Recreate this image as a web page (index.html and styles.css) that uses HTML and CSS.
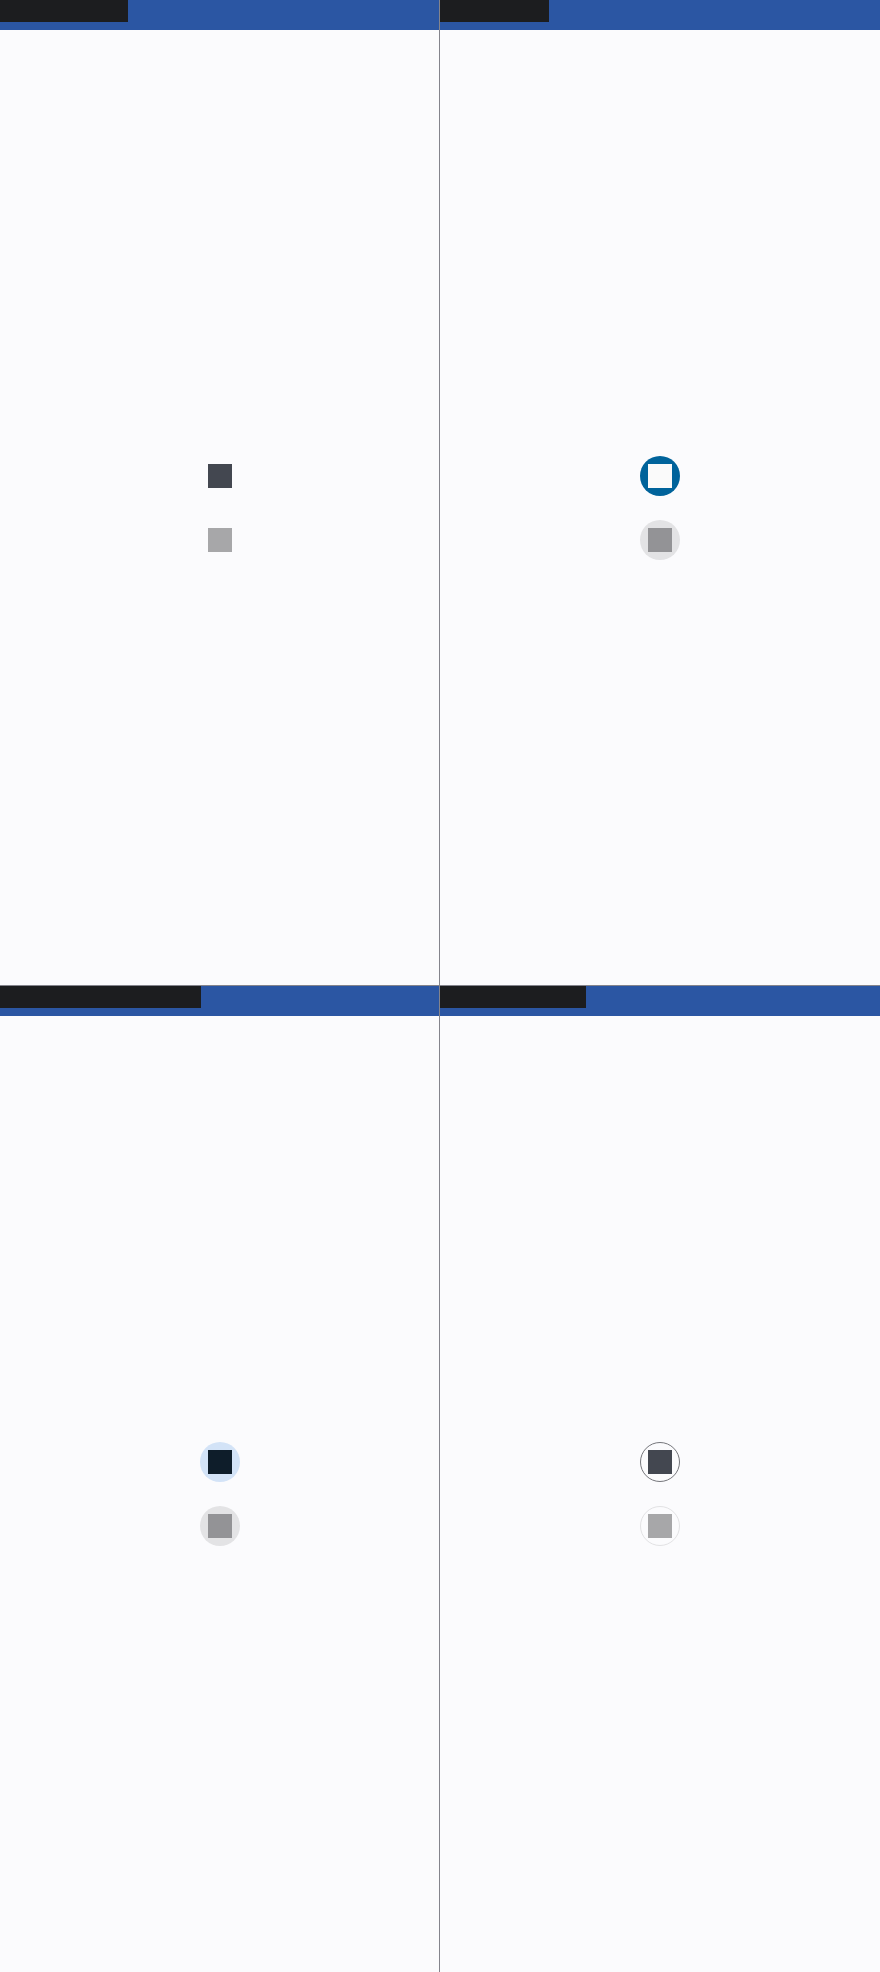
FILE: index.html
```html
<!DOCTYPE html>
<html>
<head>
<meta charset="utf-8">
<link rel="stylesheet" href="styles.css">
</head>
<body>
<div class="grid">
  <section class="panel">
    <header class="bar"><span class="tag w128"></span></header>
    <div class="body">
      <button class="btn std"><span class="sq"></span></button>
      <button class="btn std dis"><span class="sq"></span></button>
    </div>
  </section>
  <section class="panel">
    <header class="bar"><span class="tag w109"></span></header>
    <div class="body">
      <button class="btn filled"><span class="sq"></span></button>
      <button class="btn filled dis"><span class="sq"></span></button>
    </div>
  </section>
  <section class="panel">
    <header class="bar"><span class="tag w201"></span></header>
    <div class="body">
      <button class="btn tonal"><span class="sq"></span></button>
      <button class="btn tonal dis"><span class="sq"></span></button>
    </div>
  </section>
  <section class="panel">
    <header class="bar"><span class="tag w146"></span></header>
    <div class="body">
      <button class="btn outlined"><span class="sq"></span></button>
      <button class="btn outlined dis"><span class="sq"></span></button>
    </div>
  </section>
</div>
</body>
</html>
```

FILE: styles.css
```css
html, body {
  margin: 0;
  padding: 0;
  background: #fbfbfd;
}
.grid {
  position: relative;
  display: grid;
  grid-template-columns: 440px 440px;
  grid-template-rows: 986px 986px;
  width: 880px;
  height: 1972px;
}
.grid::before {
  content: "";
  position: absolute;
  left: 439px;
  top: 0;
  width: 1px;
  height: 100%;
  background: #84848c;
  z-index: 2;
}
.grid::after {
  content: "";
  position: absolute;
  left: 0;
  top: 985px;
  width: 100%;
  height: 1px;
  background: #84848c;
  z-index: 2;
}
.panel {
  background: #fbfbfd;
  display: flex;
  flex-direction: column;
}
.bar {
  height: 30px;
  background: #2b56a3;
  flex: none;
}
.tag {
  display: block;
  height: 22px;
  background: #1c1d1f;
}
.w128 { width: 128px; }
.w109 { width: 109px; }
.w201 { width: 201px; }
.w146 { width: 146px; }
.body {
  flex: 1;
  display: flex;
  flex-direction: column;
  align-items: center;
  justify-content: center;
  gap: 24px;
}
.btn {
  width: 40px;
  height: 40px;
  border-radius: 50%;
  border: none;
  padding: 0;
  margin: 0;
  display: flex;
  align-items: center;
  justify-content: center;
  background: transparent;
  box-sizing: border-box;
}
.sq {
  width: 24px;
  height: 24px;
  display: block;
}
.std .sq { background: #434750; }
.std.dis .sq { background: #a7a7a9; }
.filled { background: #00639b; }
.filled .sq { background: #fafafa; }
.filled.dis { background: #e3e3e5; }
.filled.dis .sq { background: #939396; }
.tonal { background: #d3e3f7; }
.tonal .sq { background: #0e1d2a; }
.tonal.dis { background: #e3e3e5; }
.tonal.dis .sq { background: #939396; }
.outlined { border: 1px solid #75767b; }
.outlined .sq { background: #434750; }
.outlined.dis { border: 1px solid #e2e2e4; }
.outlined.dis .sq { background: #a7a7a9; }
```
